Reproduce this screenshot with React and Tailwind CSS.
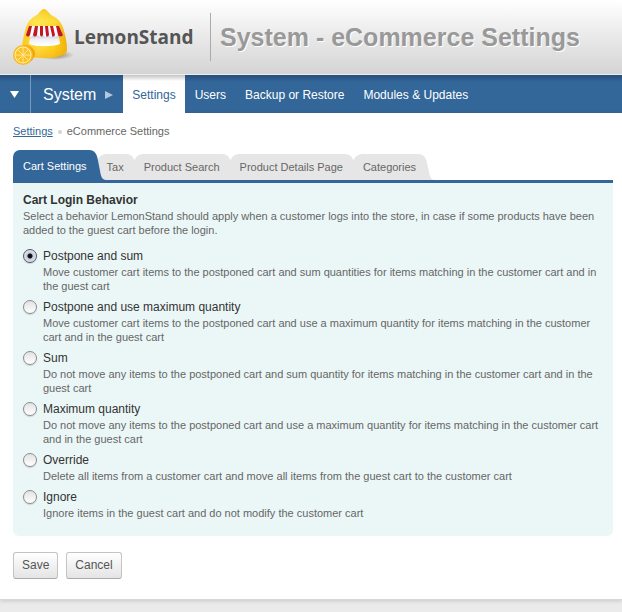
const navItems = ["Settings", "Users", "Backup or Restore", "Modules & Updates"];

const tabs = ["Cart Settings", "Tax", "Product Search", "Product Details Page", "Categories"];

const behaviors = [
  {
    id: "postpone-sum",
    name: "Postpone and sum",
    text: "Move customer cart items to the postponed cart and sum quantities for items matching in the customer cart and in the guest cart",
  },
  {
    id: "postpone-max",
    name: "Postpone and use maximum quantity",
    text: "Move customer cart items to the postponed cart and use a maximum quantity for items matching in the customer cart and in the guest cart",
  },
  {
    id: "sum",
    name: "Sum",
    text: "Do not move any items to the postponed cart and sum quantity for items matching in the customer cart and in the guest cart",
  },
  {
    id: "max",
    name: "Maximum quantity",
    text: "Do not move any items to the postponed cart and use a maximum quantity for items matching in the customer cart and in the guest cart",
  },
  {
    id: "override",
    name: "Override",
    text: "Delete all items from a customer cart and move all items from the guest cart to the customer cart",
  },
  {
    id: "ignore",
    name: "Ignore",
    text: "Ignore items in the guest cart and do not modify the customer cart",
  },
];

function LemonLogo() {
  return (
    <svg width="62" height="60" viewBox="0 0 62 60" className="shrink-0 overflow-visible" aria-hidden="true">
      <defs>
        <linearGradient id="dome" x1="0" x2="1" y1="0" y2="0">
          <stop offset="0" stopColor="#f9c81c" />
          <stop offset="0.35" stopColor="#ffe352" />
          <stop offset="0.7" stopColor="#fed322" />
          <stop offset="1" stopColor="#eeae0a" />
        </linearGradient>
        <linearGradient id="domeShade" x1="0" x2="0" y1="0" y2="1">
          <stop offset="0" stopColor="#f0b400" stopOpacity="0.5" />
          <stop offset="0.25" stopColor="#ffe95a" stopOpacity="0.4" />
          <stop offset="0.6" stopColor="#ffd21a" stopOpacity="0" />
          <stop offset="1" stopColor="#f0a400" stopOpacity="0.5" />
        </linearGradient>
        <linearGradient id="counter" x1="0" x2="0" y1="0" y2="1">
          <stop offset="0" stopColor="#b9bcc4" />
          <stop offset="0.45" stopColor="#eceef2" />
          <stop offset="1" stopColor="#ffffff" />
        </linearGradient>
        <radialGradient id="shadow">
          <stop offset="0" stopColor="#77683a" stopOpacity="0.8" />
          <stop offset="1" stopColor="#77683a" stopOpacity="0" />
        </radialGradient>
      </defs>
      <ellipse cx="43" cy="48" rx="19" ry="5" fill="url(#shadow)" />
      <path d="M32 2c2 0 4 3 7 6 6 3 11 7 13 16 2 7 3 13 3 19 0 4-8 8-22 8S11 49 10 44c0-6 1-13 3-20C15 15 19 11 25 8c3-3 5-6 7-6z" fill="url(#dome)" />
      <path d="M32 2c2 0 4 3 7 6 6 3 11 7 13 16 2 7 3 13 3 19 0 4-8 8-22 8S11 49 10 44c0-6 1-13 3-20C15 15 19 11 25 8c3-3 5-6 7-6z" fill="url(#domeShade)" />
      <path d="M19 27h27l2 9c-8 3-23 3-31 0z" fill="url(#counter)" />
      <path d="M17 36c8 2 23 2 31 0v1c-8 3-23 3-31 0z" fill="#fff" />
      <path d="M17 19h30l4 9c-1 2-4 2-5 0-1 2-4 2-5 0-1 2-4 2-5 0-1 2-4 2-5 0-1 2-4 2-5 0-1 2-4 2-5 0-1 2-4 2-6 0z" fill="#fff" />
      <path d="M17 19h3l-2 9c-1 2-3 2-4 0zM23 19h3l-1 9c-1 2-3 2-4 0zM28 19h3v9c-1 2-2 2-3 0zM33 19h3l1 9c-1 2-3 2-3 0zM38 19h3l2 9c-1 2-3 2-3 0zM44 19h3l4 9c-1 2-4 2-5 0z" fill="#c31725" />
      <ellipse cx="13" cy="47" rx="10" ry="9" fill="#f0a410" />
      <circle cx="11" cy="48" r="10" fill="#fbb91d" />
      <circle cx="11" cy="48" r="8.500" fill="#fff0a8" />
      <circle cx="11" cy="48" r="7.500" fill="#fcc02a" />
      <path d="M11 40v16M3 48h16M5.500 42.500l11 11M16.500 42.500l-11 11" stroke="#ffe98c" />
    </svg>
  );
}

function Tab({ label, active }) {
  return (
    <a
      href="#"
      className={
        active
          ? "relative z-10 block h-[30px] rounded-tl-[7px] bg-[#336699] pl-[10px] text-[11px] leading-[32px] text-white"
          : "relative block h-[26px] rounded-tl-[9px] bg-[#e6e6e6] pl-[10px] text-[11px] leading-[26px] text-[#666]"
      }
    >
      {label}
      <svg
        className={active ? "absolute left-full top-0 h-full w-[19px] text-[#336699]" : "absolute left-full top-0 h-full w-[19px] text-[#e6e6e6]"}
        viewBox="0 0 19 26"
        preserveAspectRatio="none"
        aria-hidden="true"
      >
        <path d="M0 0h2c6 0 8 4 9 9l2 9c1 5 2 8 6 8H0z" fill="currentColor" />
      </svg>
    </a>
  );
}

function Behavior({ item, checked }) {
  return (
    <div className="mb-[6px] flex gap-[6px]">
      <input
        type="radio"
        name="behavior"
        id={item.id}
        defaultChecked={checked}
        className="mt-px h-[14px] w-[14px] shrink-0 appearance-none rounded-full border border-[#8c8c8c] bg-linear-to-b from-[#e2e2e2] to-white shadow-[0_1px_1px_rgba(0,0,0,0.15)] checked:border-[#50586a] checked:bg-[radial-gradient(circle,#111_0_2px,#c3cbdc_3px,#dde3ee_6px)]"
      />
      <div>
        <label htmlFor={item.id} className="block text-[12px] leading-[17px] text-[#333]">
          {item.name}
        </label>
        <p className="text-[11px] leading-[14px] text-[#666]">{item.text}</p>
      </div>
    </div>
  );
}

const buttonClass =
  "h-[27px] rounded-[3px] border border-[#c4c4c4] border-b-[#aaa] bg-linear-to-b from-white to-[#e4e4e4] px-2 text-[12px] leading-[25px] text-[#555]";

export default function App() {
  return (
    <div className="min-h-screen bg-[#ebebeb] font-['Liberation_Sans',Arial,sans-serif]">
      <header className="flex h-[75px] items-center border-b border-[#eee] bg-linear-to-b from-white to-[#d4d4d4] pl-[12px]">
        <LemonLogo />
        <span className="w-[136px] whitespace-nowrap font-['Open_Sans',sans-serif] text-[19px] font-bold leading-[28px] text-[#555]">
          LemonStand
        </span>
        <h1 className="border-l border-[#aaa] pl-[9px] text-[25px] font-bold leading-[48px] whitespace-nowrap text-[#999] [text-shadow:1px_1px_0_#fff]">
          System - eCommerce Settings
        </h1>
      </header>

      <nav className="flex h-[38px] bg-[#336699] bg-linear-to-b from-[#24507c] to-[#336699] to-[7px] text-[12px] text-white">
        <button type="button" aria-label="Open menu" className="flex w-[31px] items-center justify-center border-r border-[#7799bb] pr-[2px]">
          <svg width="9" height="7" viewBox="0 0 9 7" aria-hidden="true">
            <path d="M0 0h9L4.500 7z" fill="currentColor" />
          </svg>
        </button>
        <a href="#" className="flex items-center gap-[9px] pl-[12px] pr-[10px] pt-[2px] text-[16px]">
          System
          <svg width="8" height="8" viewBox="0 0 8 8" aria-hidden="true">
            <path d="M0 0l8 4-8 4z" fill="#b4c8dc" />
          </svg>
        </a>
        {navItems.map((item, i) => (
          <a
            key={item}
            href="#"
            className={
              i === 0
                ? "bg-white bg-linear-to-b from-[#c4c4c4] to-white to-[6px] px-[9px] leading-[40px] text-[#336699]"
                : "ml-px px-[9px] leading-[40px]"
            }
          >
            {item}
          </a>
        ))}
      </nav>

      <main className="border-b border-[#d8d8d8] bg-white pb-[20px] pl-[13px] pr-[9px] pt-[11px] shadow-[0_1px_4px_rgba(0,0,0,0.15)]">
        <div className="flex items-center text-[11px] leading-[15px] text-[#666]">
          <a href="#" className="text-[#336699] underline">
            Settings
          </a>
          <span className="mx-[5px] h-1 w-1 rounded-full bg-[#d5d5d5]" />
          <span>eCommerce Settings</span>
        </div>

        <div className="mt-[11px] flex items-end gap-[10px] border-b-[3px] border-[#336699]">
          {tabs.map((label, i) => (
            <Tab key={label} label={label} active={i === 0} />
          ))}
        </div>

        <form>
          <fieldset className="rounded-b-[6px] bg-[#ebf7f7] px-[10px] pb-[10px] pt-[9px]">
            <legend className="float-left w-full text-[12px] font-bold leading-[17px] text-[#333]">Cart Login Behavior</legend>
            <p className="clear-both mb-[11px] text-[11px] leading-[14px] text-[#666]">
              Select a behavior LemonStand should apply when a customer logs into the store, in case if some products have been
              added to the guest cart before the login.
            </p>
            {behaviors.map((item, i) => (
              <Behavior key={item.id} item={item} checked={i === 0} />
            ))}
          </fieldset>
          <div className="mt-4 flex gap-2">
            <button type="button" className={buttonClass}>
              Save
            </button>
            <button type="button" className={buttonClass}>
              Cancel
            </button>
          </div>
        </form>
      </main>
    </div>
  );
}
